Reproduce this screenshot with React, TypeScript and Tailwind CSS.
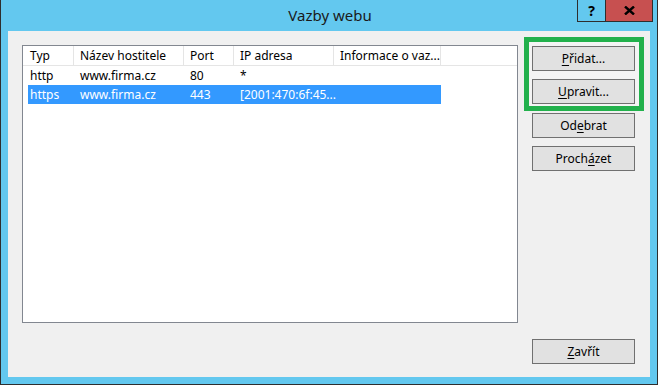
import React from 'react';

const font = { fontFamily: '"Segoe UI", "Noto Sans", sans-serif' };

type Col = { label: string; w: string; pl: string };

const cols: Col[] = [
  { label: 'Typ', w: 'w-[51px]', pl: 'pl-[7px]' },
  { label: 'Název hostitele', w: 'w-[110px]', pl: 'pl-[6px]' },
  { label: 'Port', w: 'w-[50px]', pl: 'pl-[6px]' },
  { label: 'IP adresa', w: 'w-[100px]', pl: 'pl-[6px]' },
  { label: 'Informace o vaz...', w: 'w-[107px]', pl: 'pl-[6px]' },
];

const rows = [
  { cells: ['http', 'www.firma.cz', '80', '*', ''], selected: false },
  { cells: ['https', 'www.firma.cz', '443', '[2001:470:6f:45...', ''], selected: true },
];

// text with one underlined access key
const Btn: React.FC<{ pre: string; key_: string; post: string; className?: string }> = ({ pre, key_, post, className = '' }) => (
  <button
    className={`w-[103px] h-[25px] shrink-0 bg-[#e1e1e1] border border-[#707070] text-[12px] text-black leading-none flex items-center justify-center ${className}`}
  >
    <span>
      {pre}
      <span className="underline underline-offset-2">{key_}</span>
      {post}
    </span>
  </button>
);

export default function App() {
  return (
    <div
      className="w-[658px] h-[385px] bg-[#63c8ef] border-x border-b border-[#2e2e2e] flex flex-col overflow-hidden"
      style={font}
    >
      {/* title bar */}
      <div className="relative h-[31px] shrink-0">
        <div className="text-center text-[15px] text-[#1a1a1a] pt-[4px] pl-[2px]">Vazby webu</div>
        <div className="absolute top-0 right-[4px] h-[22px] flex border-x border-b border-[#2e2e2e]">
          <div className="w-[28px] h-full border-r border-[#2e2e2e] flex items-center justify-center text-[14px] font-bold text-black">?</div>
          <div className="w-[46px] h-full bg-[#c75050] flex items-center justify-center">
            <svg width="11" height="9" viewBox="0 0 11 9">
              <path d="M1 0.5 L10 8.5 M10 0.5 L1 8.5" stroke="#000" strokeWidth="2.4" />
            </svg>
          </div>
        </div>
      </div>

      {/* body */}
      <div className="mx-[7px] flex-1 bg-[#f0f0f0] flex pl-[14px] pt-[6px] text-[12px] text-black">
        {/* list */}
        <div className="mt-[8px] w-[496px] h-[278px] bg-white border border-[#828790] shrink-0">
          <div className="flex h-[20px] border-b border-[#e5e5e5]">
            {cols.map((c) => (
              <div key={c.label} className={`${c.w} ${c.pl} h-full border-r border-[#e5e5e5] flex items-center shrink-0`}>
                {c.label}
              </div>
            ))}
          </div>
          {rows.map((r, i) => (
            <div
              key={i}
              className={`ml-[5px] w-[413px] h-[19px] flex items-center ${r.selected ? 'bg-[#3399ff] text-white' : ''}`}
            >
              {r.cells.map((t, j) => (
                <div
                  key={j}
                  className={`${j === 0 ? 'w-[46px] pl-[2px]' : `${cols[j].w} pl-[6px]`} shrink-0 whitespace-nowrap`}
                >
                  {t}
                </div>
              ))}
            </div>
          ))}
        </div>

        {/* buttons */}
        <div className="ml-[6px] flex flex-col pb-[13px]">
          <div className="w-[120px] border-[5px] border-[#22b14c] bg-[#f4f4f4] pl-[3px] pr-[4px] pt-[4px] pb-[2px] flex flex-col gap-[8px]">
            <Btn pre="" key_="P" post="řidat..." />
            <Btn pre="" key_="U" post="pravit..." />
          </div>
          <div className="pl-[8px] pt-[2px] flex flex-col gap-[8px]">
            <Btn pre="Od" key_="e" post="brat" />
            <Btn pre="Proch" key_="á" post="zet" />
          </div>
          <div className="mt-auto pl-[8px]">
            <Btn pre="" key_="Z" post="avřít" />
          </div>
        </div>
      </div>
      <div className="h-[7px] shrink-0" />
    </div>
  );
}
